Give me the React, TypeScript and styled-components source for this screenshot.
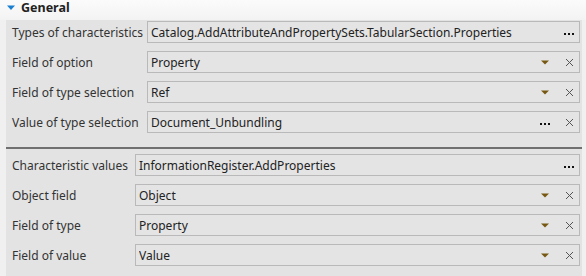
import React from "react";
import styled, { createGlobalStyle } from "styled-components";

const GlobalStyle = createGlobalStyle`
  html, body {
    margin: 0;
    padding: 0;
    background: #f0f0f0;
  }
  body {
    font-family: "Segoe UI", "Noto Sans", "Liberation Sans", sans-serif;
    font-size: 12px;
    color: #333333;
  }
`;

const Page = styled.div`
  width: 586px;
  height: 276px;
  overflow: hidden;
  background: #f0f0f0;
`;

const Header = styled.div`
  display: flex;
  align-items: center;
  gap: 6px;
  height: 20px;
  padding-left: 7px;
  padding-bottom: 4px;
  box-sizing: border-box;
  background: linear-gradient(#fbfbfb, #f3f3f3);
  font-weight: bold;
  font-size: 12.5px;
  color: #222222;
  line-height: 14px;
`;

const Panel = styled.div`
  margin-left: 6px;
  width: 576px;
  height: 256px;
  background: #e3e3e3;
  padding-top: 1px;
  box-sizing: border-box;
`;

const Section = styled.div<{ labelWidth: number }>`
  display: grid;
  grid-template-columns: ${(p) => p.labelWidth}px 1fr;
  row-gap: 8px;
  padding-right: 2px;
`;

const Label = styled.div`
  display: flex;
  align-items: center;
  padding-left: 6px;
  color: #333333;
  white-space: nowrap;
`;

const Field = styled.div`
  display: flex;
  align-items: center;
  height: 22px;
  box-sizing: border-box;
  border: 1px solid #b9b9b9;
  background: #e4e4e4;
  padding-left: 3px;
`;

const Value = styled.div`
  flex: 1;
  color: #222222;
  white-space: nowrap;
  overflow: hidden;
`;

const Slot = styled.div<{ spaced?: boolean }>`
  width: 20px;
  height: 20px;
  margin-right: ${(p) => (p.spaced ? "4px" : "0")};
  display: flex;
  align-items: center;
  justify-content: center;
  flex-shrink: 0;
`;

const Separator = styled.div`
  height: 2px;
  background: #707070;
  margin: 14px 0 5px 0;
`;

const Arrow = () => (
  <svg width="8" height="6" viewBox="0 0 8 6">
    <path d="M0 0.5 L8 0.5 L4 5 Z" fill="#1a7fd0" />
  </svg>
);

const DropIcon = () => (
  <svg width="8" height="5" viewBox="0 0 8 5">
    <path d="M0 0.5 L8 0.5 L4 4.5 Z" fill="#765810" />
  </svg>
);

const ClearIcon = () => (
  <svg width="9" height="9" viewBox="0 0 9 9">
    <path d="M1 1 L8 8 M8 1 L1 8" stroke="#555555" strokeWidth="1" />
  </svg>
);

const MoreIcon = () => (
  <svg width="10" height="8" viewBox="0 0 10 8">
    <rect x="0" y="5" width="2" height="2" fill="#111111" />
    <rect x="4" y="5" width="2" height="2" fill="#111111" />
    <rect x="8" y="5" width="2" height="2" fill="#111111" />
  </svg>
);

type RowType = {
  label: string;
  value: string;
  kind: "more" | "drop" | "moreClear";
};

const Row = ({ row }: { row: RowType }) => (
  <>
    <Label>{row.label}</Label>
    <Field>
      <Value>{row.value}</Value>
      {row.kind === "more" && (
        <Slot>
          <MoreIcon />
        </Slot>
      )}
      {row.kind === "drop" && (
        <>
          <Slot spaced>
            <DropIcon />
          </Slot>
          <Slot>
            <ClearIcon />
          </Slot>
        </>
      )}
      {row.kind === "moreClear" && (
        <>
          <Slot spaced>
            <MoreIcon />
          </Slot>
          <Slot>
            <ClearIcon />
          </Slot>
        </>
      )}
    </Field>
  </>
);

const first: RowType[] = [
  {
    label: "Types of characteristics",
    value: "Catalog.AddAttributeAndPropertySets.TabularSection.Properties",
    kind: "more",
  },
  { label: "Field of option", value: "Property", kind: "drop" },
  { label: "Field of type selection", value: "Ref", kind: "drop" },
  {
    label: "Value of type selection",
    value: "Document_Unbundling",
    kind: "moreClear",
  },
];

const second: RowType[] = [
  {
    label: "Characteristic values",
    value: "InformationRegister.AddProperties",
    kind: "more",
  },
  { label: "Object field", value: "Object", kind: "drop" },
  { label: "Field of type", value: "Property", kind: "drop" },
  { label: "Field of value", value: "Value", kind: "drop" },
];

export default function App() {
  return (
    <Page>
      <GlobalStyle />
      <Header>
        <Arrow />
        <span>General</span>
      </Header>
      <Panel>
        <Section labelWidth={141}>
          {first.map((r) => (
            <Row key={r.label} row={r} />
          ))}
        </Section>
        <Separator />
        <Section labelWidth={129}>
          {second.map((r) => (
            <Row key={r.label} row={r} />
          ))}
        </Section>
      </Panel>
    </Page>
  );
}
